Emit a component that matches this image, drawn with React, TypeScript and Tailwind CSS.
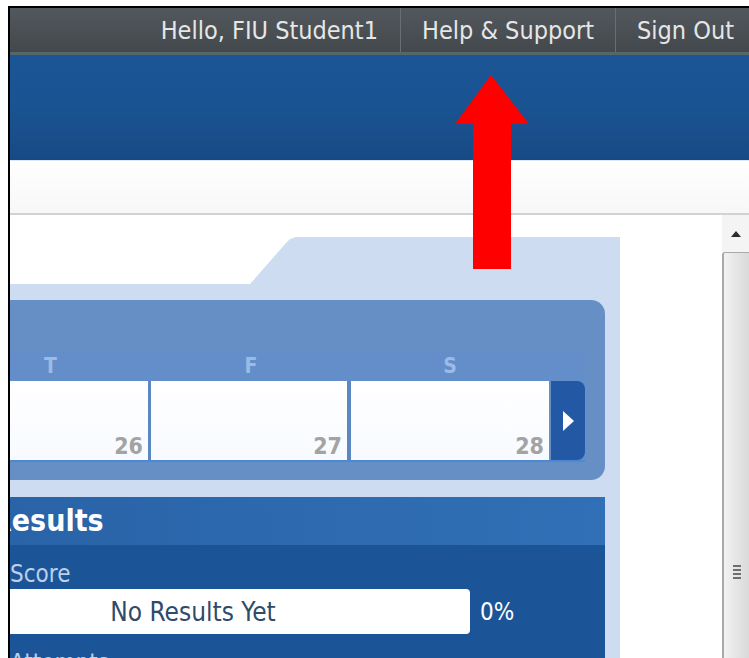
const ui = { fontFamily: '"DejaVu Sans Condensed", "DejaVu Sans", Tahoma, sans-serif' };

function TopBar() {
  return (
    <div className="flex h-[44px] justify-end bg-gradient-to-b from-[#52585d] to-[#43484c] text-[25px] leading-none text-[#e6e6e6]">
      <div className="flex items-center pr-[22px]">Hello, FIU Student1</div>
      <div className="flex w-[215px] items-center border-l border-[#686e73] pl-[21px]">Help &amp; Support</div>
      <div className="flex w-[134px] items-center border-l border-[#686e73] pl-[21px]">Sign Out</div>
    </div>
  );
}

function DayCell({ day, width }: { day: number; width: string }) {
  return (
    <div className={`flex h-full items-end justify-end bg-gradient-to-b from-white to-[#f7faff] pb-[2px] pr-[5px] ${width}`}>
      <span className="text-[23px] font-bold leading-none text-[#a3a3a3]">{day}</span>
    </div>
  );
}

function WeekPanel() {
  return (
    <div className="rounded-r-[14px] bg-[#6690c5] pb-[18px] pr-[20px] pt-[52px]">
      <div className="ml-[-60px] flex h-[29px] w-[635px] items-center bg-[#638ec9] text-[21px] font-bold text-[#9bbbe6]">
        <div className="w-[201px] text-center">T</div>
        <div className="w-[200px] text-center">F</div>
        <div className="w-[198px] text-center">S</div>
      </div>
      <div className="ml-[-60px] flex h-[81px] border-b-2 border-[#4d88d4]">
        <DayCell day={26} width="w-[198px]" />
        <div className="w-[3px] bg-[#5b87c2]" />
        <DayCell day={27} width="w-[196px]" />
        <div className="w-[4px] bg-[#5b87c2]" />
        <DayCell day={28} width="w-[198px]" />
        <button className="ml-[2px] flex h-[79px] w-[34px] items-center justify-center rounded-r-[8px] bg-[#2358a5]">
          <svg width="11" height="20" viewBox="0 0 11 20">
            <polygon points="0,0 11,10 0,20" fill="#ffffff" />
          </svg>
        </button>
      </div>
    </div>
  );
}

function ResultsPanel() {
  return (
    <div className="h-[200px] bg-[#1b5598]">
      <div className="flex h-[48px] items-center bg-gradient-to-r from-[#2963a8] to-[#3170b6]">
        <span className="ml-[-19px] text-[30px] font-bold leading-none text-white">Results</span>
      </div>
      <div className="pt-[16px] text-[24px] leading-[26px]">
        <div className="text-[#bcd0ea]">Score</div>
        <div className="mt-[2px] flex items-center">
          <div className="ml-[-94px] flex h-[45px] w-[554px] items-center justify-center rounded-[4px] bg-white text-[26px] text-[#2f4a6b]">
            No Results Yet
          </div>
          <span className="ml-[10px] text-white">0%</span>
        </div>
        <div className="mt-[16px] text-[#bcd0ea]">Attempts</div>
      </div>
    </div>
  );
}

function Scrollbar() {
  return (
    <div className="flex w-[27px] flex-col bg-[#f4f4f4]">
      <div className="flex h-[37px] items-center justify-center">
        <svg width="10" height="6" viewBox="0 0 10 6">
          <polygon points="5,0 10,6 0,6" fill="#2b2b2b" />
        </svg>
      </div>
      <div className="flex flex-1 flex-col items-center rounded-tl-[3px] border-l-2 border-t border-[#a9a9a9] bg-gradient-to-r from-[#f2f2f2] to-[#d9d9d9] pt-[312px]">
        <div className="flex w-[8px] flex-col gap-[2px]">
          <div className="h-[2px] bg-[#6f6f6f]" />
          <div className="h-[2px] bg-[#6f6f6f]" />
          <div className="h-[2px] bg-[#6f6f6f]" />
          <div className="h-[2px] bg-[#6f6f6f]" />
        </div>
      </div>
    </div>
  );
}

export default function App() {
  return (
    <div className="relative h-[658px] w-[749px] overflow-hidden bg-white pl-[8px] pt-[6px]" style={ui}>
      <div className="flex h-full flex-col overflow-hidden border-l-2 border-t-2 border-black">
        <TopBar />
        <div className="h-[3px] bg-[#56676a]" />

        {/* header band */}
        <div className="h-[105px] bg-gradient-to-b from-[#1b5596] via-[#1a5392] to-[#174a85]" />
        <div className="h-[1px] bg-[#dce8f5]" />
        <div className="h-[52px] bg-gradient-to-b from-white to-[#f7f7f7]" />
        <div className="h-[2px] bg-[#d2d2d2]" />

        <div className="flex flex-1 overflow-hidden">
          <div className="flex-1 overflow-hidden pt-[22px]">
            <div className="w-[610px]">
              {/* folder tab */}
              <div className="flex h-[47px]">
                <div className="w-[240px]" />
                <div className="flex-1 bg-[#cddcf0] [clip-path:polygon(0_100%,36px_6px,40px_2px,46px_0,100%_0,100%_100%)]" />
              </div>
              <div className="bg-[#cddcf0] pr-[15px] pt-[16px]">
                <WeekPanel />
                <div className="h-[17px]" />
                <ResultsPanel />
              </div>
            </div>
          </div>
          <Scrollbar />
        </div>
      </div>

      {/* pointer arrow */}
      <svg className="absolute left-0 top-0" width="749" height="658" viewBox="0 0 749 658">
        <polygon points="491,75 529,124 511,124 511,269 473,269 473,124 455,124" fill="#ff0000" />
      </svg>
    </div>
  );
}
